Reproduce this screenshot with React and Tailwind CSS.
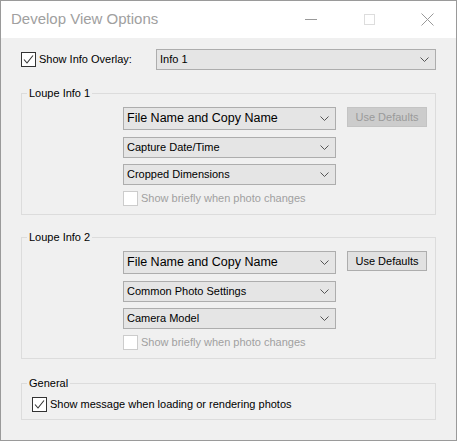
import React from 'react';

const font = { fontFamily: '"Liberation Sans", Arial, sans-serif' };

const Chevron = () => (
  <svg width="9" height="5" viewBox="0 0 9 5" className="shrink-0">
    <polyline points="0.5,0.5 4.5,4.5 8.5,0.5" fill="none" stroke="#555" strokeWidth="1" />
  </svg>
);

const Select = ({ label, big, className = '' }) => (
  <div
    className={`flex items-center justify-between border border-[#adadad] bg-[#e5e5e5] pl-[3px] pr-[6px] text-black ${
      big ? 'h-[23px] text-[12.5px]' : 'h-[21px] text-[11px]'
    } ${className}`}
  >
    <span className="leading-none">{label}</span>
    <Chevron />
  </div>
);

const Checkbox = ({ checked, disabled, label }) => (
  <label className="flex items-center gap-[3px]">
    <span
      className={`flex h-[15px] w-[15px] shrink-0 items-center justify-center border bg-white ${
        disabled ? 'border-[#cccccc]' : 'border-[#333333]'
      }`}
    >
      {checked && (
        <svg width="13" height="13" viewBox="0 0 13 13">
          <polyline points="2,6.5 5,10 11,2.5" fill="none" stroke="#333" strokeWidth="1.1" />
        </svg>
      )}
    </span>
    <span className={`text-[11px] leading-none ${disabled ? 'text-[#a0a0a0]' : 'text-black'}`}>{label}</span>
  </label>
);

const Group = ({ title, children, className = '' }) => (
  <fieldset className={`border border-[#dcdcdc] ${className}`}>
    <legend className="ml-[5px] px-[2px] text-[11px] font-normal leading-[14px] text-black">{title}</legend>
    {children}
  </fieldset>
);

const LoupeGroup = ({ title, lines, defaultsEnabled, className }) => (
  <Group title={title} className={`pb-[8px] pt-[7px] ${className}`}>
    <div className="flex items-start gap-[11px] pl-[101px]">
      <div className="flex w-[213px] flex-col">
        <Select label={lines[0]} big />
        <Select label={lines[1]} className="mt-[7px]" />
        <Select label={lines[2]} className="mt-[6px]" />
        <div className="mt-[6px]">
          <Checkbox disabled label="Show briefly when photo changes" />
        </div>
      </div>
      <button
        className={`h-[20px] w-[80px] border text-[11px] ${
          defaultsEnabled
            ? 'border-[#adadad] bg-[#e1e1e1] text-black'
            : 'border-[#c4c4c4] bg-[#cccccc] text-[#9a9a9a]'
        }`}
      >
        Use Defaults
      </button>
    </div>
  </Group>
);

export default function App() {
  return (
    <div style={font} className="flex h-[441px] w-[457px] flex-col border border-[#9a9a9a] bg-[#f0f0f0]">
      {/* Title bar */}
      <div className="flex h-[37px] shrink-0 items-center bg-white">
        <div className="flex-1 pl-[10px] text-[15px] text-[#a0a0a0]">Develop View Options</div>
        <div className="flex h-full w-[58px] items-center justify-center">
          <div className="h-px w-[12px] bg-[#999999]" />
        </div>
        <div className="flex h-full w-[58px] items-center justify-center">
          <div className="h-[11px] w-[11px] border border-[#dddddd]" />
        </div>
        <div className="flex h-full w-[58px] items-center justify-center">
          <svg width="13" height="13" viewBox="0 0 13 13">
            <path d="M0.5 0.5L12.5 12.5M12.5 0.5L0.5 12.5" stroke="#999" strokeWidth="1" fill="none" />
          </svg>
        </div>
      </div>

      {/* Body */}
      <div className="flex flex-col px-[20px] pt-[11px]">
        <div className="flex items-center">
          <div className="w-[135px]">
            <Checkbox checked label="Show Info Overlay:" />
          </div>
          <Select label="Info 1" className="h-[20px] flex-1" />
        </div>

        <LoupeGroup
          title="Loupe Info 1"
          lines={['File Name and Copy Name', 'Capture Date/Time', 'Cropped Dimensions']}
          className="mt-[16px]"
        />
        <LoupeGroup
          title="Loupe Info 2"
          lines={['File Name and Copy Name', 'Common Photo Settings', 'Camera Model']}
          defaultsEnabled
          className="mt-[15px]"
        />

        <Group title="General" className="mt-[17px] pb-[7px] pt-[7px]">
          <div className="pl-[10px]">
            <Checkbox checked label="Show message when loading or rendering photos" />
          </div>
        </Group>
      </div>
    </div>
  );
}
